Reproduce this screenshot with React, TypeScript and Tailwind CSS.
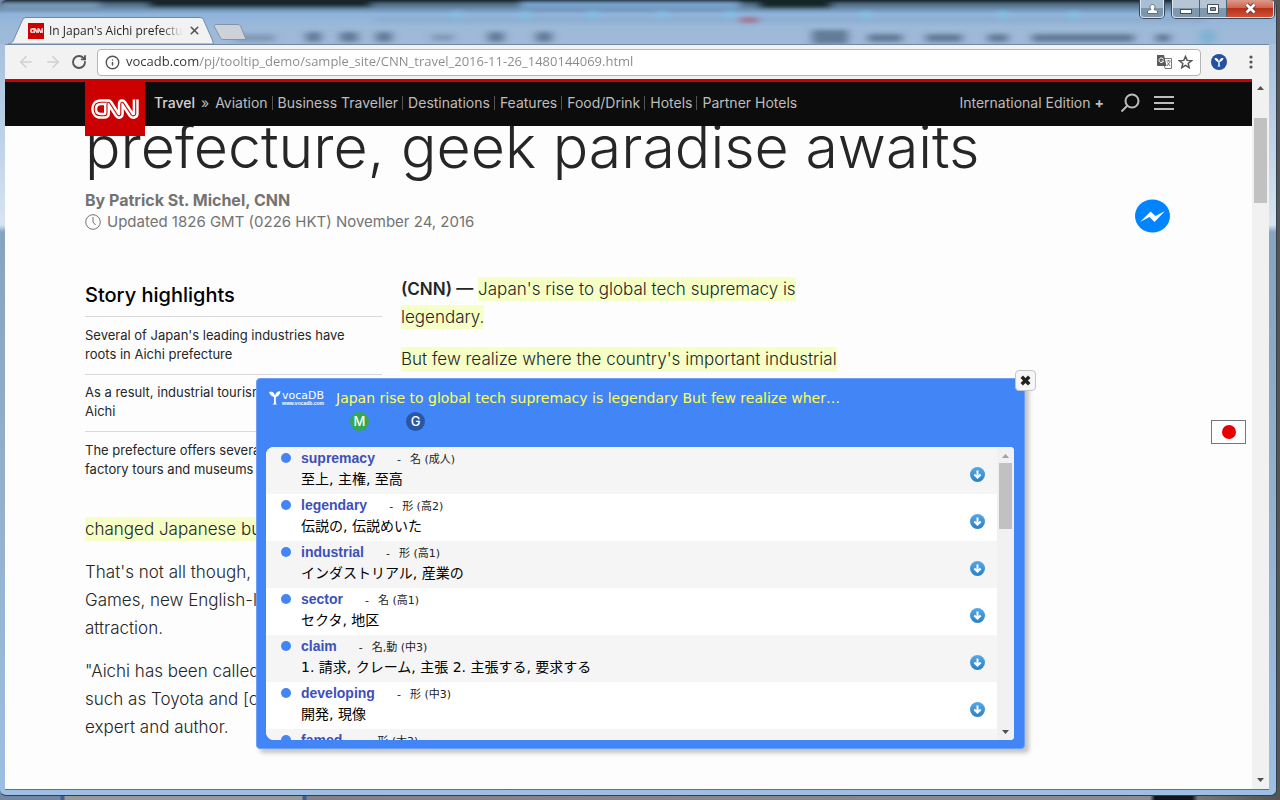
import React from "react";
import { ArrowLeft, ArrowRight, Info, RotateCw, X } from "lucide-react";

const navLinks = [
  "Aviation",
  "Business Traveller",
  "Destinations",
  "Features",
  "Food/Drink",
  "Hotels",
  "Partner Hotels",
];

const words = [
  { word: "supremacy", kind: "名 (成人)", meaning: "至上, 主権, 至高" },
  { word: "legendary", kind: "形 (高2)", meaning: "伝説の, 伝説めいた" },
  { word: "industrial", kind: "形 (高1)", meaning: "インダストリアル, 産業の" },
  { word: "sector", kind: "名 (高1)", meaning: "セクタ, 地区" },
  { word: "claim", kind: "名,動 (中3)", meaning: "1. 請求, クレーム, 主張 2. 主張する, 要求する" },
  { word: "developing", kind: "形 (中3)", meaning: "開発, 現像" },
  { word: "famed", kind: "形 (大3)", meaning: "有名な" },
];

function CnnLogo({ className }: { className: string }) {
  const letters =
    "M15.500 3.200 H10 C5.500 3.200 3.200 6 3.200 10 C3.200 14 5.500 16.800 10 16.800 H13 C15 16.800 16 15.800 16 14 V5 C16 3 17.800 2.600 18.800 4.200 L26.300 15.800 C27.500 17.600 29.800 17 29.800 14.800 V5 C29.800 3 31.600 2.600 32.600 4.200 L40.200 15.800 C41.500 17.700 44.700 17 44.700 14.500 V.5";
  return (
    <svg viewBox="0 0 48 20" className={className} aria-hidden="true" fill="none">
      <path d={letters} stroke="#fff" strokeWidth="6" />
      <path d={letters} stroke="#cc0000" strokeWidth="1.100" />
    </svg>
  );
}

function TitleBar() {
  return (
    <header className="relative flex h-11 shrink-0 items-end overflow-hidden rounded-t-md bg-[linear-gradient(#17232c_0px,#4d6a80_4px,#8fb4dc_14px,#9db9d9_28px,#9fbad8_44px)] font-['Open_Sans','Noto_Sans_CJK_KR',sans-serif]">
      <svg className="absolute inset-0 h-full w-full" aria-hidden="true">
        <defs>
          <filter id="soft" x="-20%" y="-80%" width="140%" height="260%">
            <feGaussianBlur stdDeviation="4 2" />
          </filter>
        </defs>
        <g filter="url(#soft)">
          <rect x="520" y="2" width="220" height="7" fill="#7aa5d2" />
          <rect x="0" y="3" width="100" height="6" fill="#7b9bb8" />
          <rect x="150" y="0" width="220" height="6" fill="#101a20" />
          <rect x="760" y="0" width="70" height="7" fill="#101a20" />
          <rect x="375" y="19" width="830" height="2" fill="#7c93ae" opacity=".6" />
          <g fill="#536d88" opacity=".8">
            <rect x="235" y="34" width="40" height="8" opacity=".5" />
            <rect x="306" y="32" width="15" height="10" />
            <rect x="340" y="32" width="18" height="10" />
            <rect x="376" y="32" width="16" height="10" />
            <rect x="432" y="34" width="22" height="7" opacity=".5" />
            <rect x="488" y="32" width="16" height="10" />
            <rect x="536" y="32" width="16" height="10" />
            <rect x="812" y="30" width="36" height="14" />
            <rect x="868" y="34" width="34" height="8" />
            <rect x="926" y="34" width="36" height="8" />
            <rect x="988" y="34" width="20" height="8" />
            <rect x="1032" y="34" width="102" height="8" />
            <rect x="1156" y="34" width="14" height="8" />
          </g>
          <circle cx="1208" cy="37" r="8" fill="#7fb0d2" />
          <rect x="740" y="18" width="18" height="4" fill="#a85a70" />
          <g fill="#7cc4ec">
            <circle cx="457" cy="15" r="4" />
            <circle cx="525" cy="15" r="4" />
            <circle cx="593" cy="15" r="4" />
            <circle cx="662" cy="15" r="4" />
            <circle cx="730" cy="15" r="4" />
            <circle cx="866" cy="15" r="4" />
            <circle cx="1003" cy="15" r="4" />
            <circle cx="1074" cy="15" r="4" />
          </g>
        </g>
      </svg>

      <div className="relative ml-2 flex h-[27px] w-[206px] items-center gap-[5px] pl-5">
        <svg className="absolute inset-0 h-full w-full" viewBox="0 0 206 27" preserveAspectRatio="none" aria-hidden="true">
          <path d="M0 27 C4 26 5 25 6 22 L14 4 C15 1 17 .5 19 .5 H191 C194 .5 195 1 196 4 L204 22 C205 25 205 26 206 27 Z" fill="#f2f2f2" stroke="#6f88a4" />
        </svg>
        <span className="relative flex h-4 w-4 shrink-0 items-center justify-center bg-[#cc0000]">
          <CnnLogo className="w-[13px]" />
        </span>
        <span className="relative w-[134px] overflow-hidden whitespace-nowrap bg-[linear-gradient(90deg,#222_112px,transparent_134px)] bg-clip-text text-xs text-transparent">
          In Japan's Aichi prefectu
        </span>
        <button type="button" aria-label="Close tab" className="relative text-[#555]">
          <X size={13} strokeWidth={3} />
        </button>
      </div>
      <button type="button" aria-label="New tab" className="relative mb-1 -ml-px">
        <svg width="34" height="16" viewBox="0 0 34 16">
          <path d="M3 .5 H25 C26 .5 27 1 28 3 L33 15.500 H11 C9 15.500 8 15 7 13 L1.500 3 C1 1.500 1.500 .5 3 .5Z" fill="#cdd2d8" stroke="#8294aa" />
        </svg>
      </button>

      <div className="relative ml-auto flex h-[18px] gap-2 self-start pr-[2px] text-white">
        <button type="button" aria-label="Profile" className="flex w-6 items-center justify-center rounded-b border border-t-0 border-[#d7e3ee] bg-[linear-gradient(#a9bfd1_50%,#7c97ad_50%)] ring-1 ring-[#39495a]">
          <svg width="11" height="10" viewBox="0 0 11 10" fill="#fff" stroke="#3e4c5a" strokeWidth=".7">
            <path d="M.5 9.500 V8 C.5 6.500 2 6 4 5.600 C2.300 3.500 3 .5 5.500 .5 C8 .5 8.700 3.500 7 5.600 C9 6 10.500 6.500 10.500 8 V9.500Z" />
          </svg>
        </button>
        <div className="flex overflow-hidden rounded-b border border-t-0 border-[#d7e3ee] bg-[linear-gradient(#b5c5d4_50%,#7f98ad_50%)] ring-1 ring-[#39495a]">
          <button type="button" aria-label="Minimize" className="flex w-[27px] items-center justify-center border-r border-[#4d6072]">
            <svg width="12" height="10" viewBox="0 0 12 10"><rect x=".5" y="5.500" width="11" height="4" fill="#fff" stroke="#444e5c" /></svg>
          </button>
          <button type="button" aria-label="Restore" className="flex w-[27px] items-center justify-center border-r border-[#4d6072]">
            <svg width="12" height="10" viewBox="0 0 12 10"><path d="M.5 .5 H11.500 V9.500 H.5Z M3.500 3.500 V6.500 H8.500 V3.500Z" fillRule="evenodd" fill="#fff" stroke="#444e5c" /></svg>
          </button>
          <button type="button" aria-label="Close window" className="flex w-[46px] items-center justify-center bg-[linear-gradient(#dc9a8b_0%,#cf5f49_50%,#bb2f18_50%,#cf5236_100%)]">
            <svg width="13" height="11" viewBox="0 0 13 11" fill="none">
              <path d="M2.500 1.500 L10.500 9.500 M10.500 1.500 L2.500 9.500" stroke="#4c3a44" strokeWidth="4.500" />
              <path d="M2.500 1.500 L10.500 9.500 M10.500 1.500 L2.500 9.500" stroke="#fff" strokeWidth="2.800" />
            </svg>
          </button>
        </div>
      </div>
    </header>
  );
}

function Toolbar() {
  return (
    <div className="flex h-[35px] shrink-0 items-center border-t border-[#6f88a4] bg-[#f2f2f2] pl-3 pr-[10px] text-[#555]">
      <button type="button" aria-label="Back" className="text-[#cfcfcf]"><ArrowLeft size={18} /></button>
      <button type="button" aria-label="Forward" className="ml-[9px] text-[#cfcfcf]"><ArrowRight size={18} /></button>
      <button type="button" aria-label="Reload" className="ml-[9px]"><RotateCw size={16} strokeWidth={2.800} /></button>
      <div className="ml-[10px] flex h-[27px] flex-1 items-center gap-[6px] rounded-sm border border-[#b5b5b5] bg-white px-[7px]">
        <Info size={15} strokeWidth={2.300} className="shrink-0" />
        <input
          aria-label="Address"
          defaultValue="vocadb.com/pj/tooltip_demo/sample_site/CNN_travel_2016-11-26_1480144069.html"
          className="min-w-0 flex-1 bg-[linear-gradient(90deg,#333_73px,#888_73px)] bg-clip-text font-['Open_Sans',sans-serif] text-[13px] text-transparent outline-none"
        />
        <button type="button" aria-label="Translate this page">
          <svg width="15" height="14" viewBox="0 0 15 14">
            <path d="M6 3.500 H14.500 V13.500 H8Z" fill="#fff" stroke="#777" />
            <path d="M0 0 H7 L9.500 11 H1 Q0 11 0 10Z" fill="#5a5a5a" />
            <path d="M6.500 4.500 A2.300 2.300 0 1 0 6.500 6 H4.500" fill="none" stroke="#fff" />
            <path d="M9.500 6 H13.500 M11.500 5 V6 M10 11 L13 6.500 M10.500 7.500 L13 11" fill="none" stroke="#777" />
          </svg>
        </button>
        <button type="button" aria-label="Bookmark this page">
          <svg width="15" height="14" viewBox="0 0 15 14" fill="none" stroke="#555" strokeWidth="1.500">
            <path d="M7.500 1.500 L9.200 5.400 L13.500 5.700 L10.200 8.500 L11.200 12.700 L7.500 10.400 L3.800 12.700 L4.800 8.500 L1.500 5.700 L5.800 5.400Z" />
          </svg>
        </button>
      </div>
      <button type="button" aria-label="vocaDB extension" className="ml-[10px]">
        <svg width="16" height="16" viewBox="0 0 16 16">
          <circle cx="8" cy="8" r="8" fill="#2350a0" />
          <path d="M3.500 4 C6 3.500 7.500 5 8 8 C8.500 5 10 3.500 12.500 4 C12 6.500 10.500 7.500 8.700 8 V11.500 L9.500 12.500 H6.500 L7.300 11.500 V8 C5.500 7.500 4 6.500 3.500 4Z" fill="#fff" />
        </svg>
      </button>
      <button type="button" aria-label="Browser menu" className="ml-[21px] mr-[5px]">
        <svg width="6" height="14" viewBox="0 0 6 14" fill="#555"><circle cx="3" cy="2" r="1.600" /><circle cx="3" cy="7" r="1.600" /><circle cx="3" cy="12" r="1.600" /></svg>
      </button>
    </div>
  );
}

function SiteNav() {
  return (
    <nav className="relative z-10 flex h-[47px] items-start border-t-[3px] border-[#cc0000] bg-[#0c0c0c] pl-20 pr-[78px] text-sm text-[#bdbdbd]">
      <a href="#home" aria-label="CNN" className="flex h-[54px] w-[60px] shrink-0 items-center justify-center bg-[#cc0000]">
        <CnnLogo className="w-12" />
      </a>
      <div className="ml-[9px] flex h-11 flex-1 items-center pb-[2px]">
        <a href="#travel" className="font-medium text-[#d2d2d2]">Travel</a>
        <span className="mx-[6px]">»</span>
        {navLinks.map((label, i) => (
          <React.Fragment key={label}>
            {i > 0 && <span className="ml-1 mr-[5px] h-[14px] w-px bg-[#555]" />}
            <a href="#section" className="whitespace-nowrap">{label}</a>
          </React.Fragment>
        ))}
        <button type="button" className="ml-auto">International Edition <b>+</b></button>
        <button type="button" aria-label="Search" className="ml-4">
          <svg width="20" height="20" viewBox="0 0 20 20" fill="none" stroke="#bdbdbd" strokeWidth="2"><circle cx="12" cy="8" r="6.500" /><path d="M7.500 12.500 L1.500 18.500" /></svg>
        </button>
        <button type="button" aria-label="Menu" className="ml-[14px]">
          <svg width="20" height="14" viewBox="0 0 20 14" fill="#bdbdbd"><path d="M0 0H20V2H0ZM0 6H20V8H0ZM0 12H20V14H0Z" /></svg>
        </button>
      </div>
    </nav>
  );
}

function Mark({ children }: { children: React.ReactNode }) {
  return <mark className="bg-[#f5ffc6] py-[2px] text-inherit">{children}</mark>;
}

function Article() {
  return (
    <article className="px-20 text-[#262626]">
      <h1 className="-mt-[17px] h-[76px] whitespace-nowrap text-[59px] font-light leading-[76px]">prefecture, geek paradise awaits</h1>
      <p className="mt-1 text-base font-bold leading-[22px] text-[#737373]">By Patrick St. Michel, CNN</p>
      <p className="flex items-center gap-[6px] text-[15px] leading-[22px] text-[#737373]">
        <svg width="16" height="16" viewBox="0 0 16 16" fill="none" stroke="#737373"><circle cx="8" cy="8" r="7.300" /><path d="M8 3 V8 L10.500 11" /></svg>
        Updated 1826 GMT (0226 HKT) November 24, 2016
      </p>

      <div className="mt-[42px] flex h-[240px] gap-[19px]">
        <aside className="w-[297px] shrink-0 pt-[7px]">
          <h2 className="pb-2 text-xl font-medium leading-[26px] text-black">Story highlights</h2>
          <ul className="text-[13px] leading-[19px]">
            <li className="border-t border-[#d8d8d8] pt-[9px] pb-[10px]">Several of Japan's leading industries have<br />roots in Aichi prefecture</li>
            <li className="border-t border-[#d8d8d8] pt-[8px] pb-[10px]">As a result, industrial tourism<br />Aichi</li>
            <li className="border-t border-[#d8d8d8] pt-[9px]">The prefecture offers several<br />factory tours and museums</li>
          </ul>
        </aside>
        <div className="flex flex-col gap-[14px] text-[17px] font-light leading-[28px]">
          <p><strong className="font-semibold">(CNN) —</strong> <Mark>Japan's rise to global tech supremacy is</Mark><br /><Mark>legendary.</Mark></p>
          <p><Mark>But few realize where the country's important industrial</Mark></p>
        </div>
      </div>

      <div className="flex flex-col gap-[15px] text-[17px] font-light leading-[28px]">
        <p><Mark>changed Japanese bu</Mark></p>
        <p>That's not all though,<br />Games, new English-l<br />attraction.</p>
        <p>"Aichi has been called<br />such as Toyota and [c<br />expert and author.</p>
      </div>
    </article>
  );
}

function DownIcon() {
  return (
    <svg width="15" height="15" viewBox="0 0 15 15">
      <defs><linearGradient id="down" x2="0" y2="1"><stop stopColor="#56a9e8" /><stop offset="1" stopColor="#2b80c4" /></linearGradient></defs>
      <circle cx="7.500" cy="7.500" r="7.500" fill="url(#down)" />
      <path d="M7.500 3.500 V10.500 M4.300 7.500 L7.500 10.700 L10.700 7.500" fill="none" stroke="#fff" strokeWidth="2" />
    </svg>
  );
}

function Popup() {
  return (
    <section aria-label="vocaDB dictionary" className="absolute left-[251px] top-[299px] z-20 flex h-[371px] w-[769px] flex-col rounded-[4px] border border-[#6fa0f5] bg-[#4285f6] pb-2 pl-[9px] pr-[10px] shadow-[4px_4px_4px_#c4c4c4]">
      <button type="button" aria-label="Close" className="absolute -right-3 -top-[9px] flex h-[21px] w-[21px] items-center justify-center rounded-sm border border-[#c5c5c5] bg-[#f6f6f6] text-[#222]">
        <X size={15} strokeWidth={5.500} strokeLinecap="butt" />
      </button>
      <div className="flex h-[68px] shrink-0 gap-[13px] pl-[3px] pt-2">
        <div className="flex w-[54px] shrink-0 gap-px pt-1 font-['DejaVu_Sans',sans-serif] text-white">
          <svg width="12" height="14" viewBox="0 0 12 14" fill="#fff" className="shrink-0">
            <path d="M0 1 C4 0 5.500 2 6 5 C6.500 2 8 .5 11.500 0 C11 4 9 5.500 6.800 6 V12 L8 13.500 H3.500 L5 12 V6 C2.500 5 1 4 0 1Z" />
          </svg>
          <div className="whitespace-nowrap">
            <div className="text-[11px] leading-[10px]">vocaDB</div>
            <div className="font-['Liberation_Sans',sans-serif] text-[5px] font-bold leading-[5px]">www.vocadb.com</div>
          </div>
        </div>
        <div className="flex flex-col gap-[3px]">
          <h3 className="font-['DejaVu_Sans',sans-serif] text-sm leading-[22px] text-[#ffff55]">Japan rise to global tech supremacy is legendary But few realize wher…</h3>
          <div className="flex gap-[37px] pl-[14px] text-[13px] font-medium leading-[19px] text-white">
            <button type="button" className="h-[19px] w-[19px] rounded-full bg-[#34a853]">M</button>
            <button type="button" className="h-[19px] w-[19px] rounded-full bg-[#2a56a5]">G</button>
          </div>
        </div>
      </div>
      <div className="flex min-h-0 flex-1 overflow-hidden rounded-l-[8px] rounded-r-sm bg-white">
        <ul className="min-w-0 flex-1 overflow-hidden">
          {words.map((w) => (
            <li key={w.word} className="flex h-[47px] items-start pl-[15px] pr-3 odd:bg-[#f5f5f5]">
              <span className="mr-[10px] mt-[6px] h-[10px] w-[10px] rounded-full bg-[#4285f6]" />
              <div className="flex-1">
                <div className="flex h-[22px] items-baseline">
                  <b className="font-['Liberation_Sans',sans-serif] text-sm leading-[22px] text-[#3c50b8]">{w.word}</b>
                  <span className="ml-[22px] flex gap-[9px] font-['DejaVu_Sans','Noto_Sans_CJK_JP',sans-serif] text-[11px] leading-[22px] text-[#222]">
                    <span>-</span>
                    <span>{w.kind}</span>
                  </span>
                </div>
                <p className="font-['DejaVu_Sans','Noto_Sans_CJK_JP',sans-serif] text-sm leading-[20px] text-black">{w.meaning}</p>
              </div>
              <button type="button" aria-label="More" className="mt-5"><DownIcon /></button>
            </li>
          ))}
        </ul>
        <div className="flex w-[17px] shrink-0 flex-col items-center bg-[#f1f1f1]" aria-hidden="true">
          <svg width="7" height="16" viewBox="0 0 7 16" fill="#a0a0a0"><path d="M0 11 L3.500 7 L7 11Z" /></svg>
          <div className="h-[66px] w-[13px] bg-[#c1c1c1]" />
          <svg width="7" height="16" viewBox="0 0 7 16" className="mt-auto" fill="#505050"><path d="M0 6 L3.500 10 L7 6Z" /></svg>
        </div>
      </div>
    </section>
  );
}

export default function App() {
  return (
    <div className="flex h-screen flex-col overflow-hidden bg-[linear-gradient(90deg,#7386a6_60px,#3e5f8f_61px,#3e5f8f_64px,#9b989c_65px,#9b989c_302px,#3e5f8f_303px,#3e5f8f_306px,#858087_307px,#8d8b8d_1150px,#12151c_1155px,#12151c_1192px,#777_1198px,#555_1276px)] pb-1 pr-[3px] font-['Inter',sans-serif]">
      <div className="flex min-h-0 flex-1 flex-col rounded-md border-b border-r border-[#33404c] bg-[linear-gradient(#9db9d9_0px,#c4d6ea_160px,#d8e4f0_225px,#86a3c0_232px,#93afcb_60%,#9dbfe4)] pb-[5px] pl-[5px] pr-[7px]">
        <div className="-ml-[5px] -mr-[7px]"><TitleBar /></div>
        <Toolbar />
        <div className="flex min-h-0 flex-1 border-b border-[#5d7085] bg-[#fdfdfd]">
          <main className="relative min-w-0 flex-1 overflow-hidden">
            <SiteNav />
            <Article />
            <button type="button" aria-label="Share with Messenger" className="absolute right-[82px] top-[120px]">
              <svg width="35" height="34" viewBox="0 0 35 34"><ellipse cx="17.500" cy="17" rx="17.500" ry="16.500" fill="#0084ff" /><path d="M5 23 L15.500 12.500 L20.500 17 L30 12 L19.500 23 L14.500 18Z" fill="#fff" /></svg>
            </button>
            <button type="button" aria-label="Japanese" className="absolute right-[6px] top-[341px] flex h-6 w-[35px] items-center justify-center border border-[#777] bg-white">
              <span className="h-[14px] w-[14px] rounded-full bg-[#e60000]" />
            </button>
            <Popup />
          </main>
          <div className="flex w-[17px] shrink-0 flex-col items-center bg-[#f1f1f1]" aria-hidden="true">
            <svg width="7" height="39" viewBox="0 0 7 39" fill="#505050"><path d="M0 11 L3.500 7 L7 11Z" /></svg>
            <div className="h-[85px] w-[13px] bg-[#c1c1c1]" />
            <svg width="7" height="17" viewBox="0 0 7 17" className="mt-auto" fill="#505050"><path d="M0 6 L3.500 10 L7 6Z" /></svg>
          </div>
        </div>
      </div>
    </div>
  );
}
